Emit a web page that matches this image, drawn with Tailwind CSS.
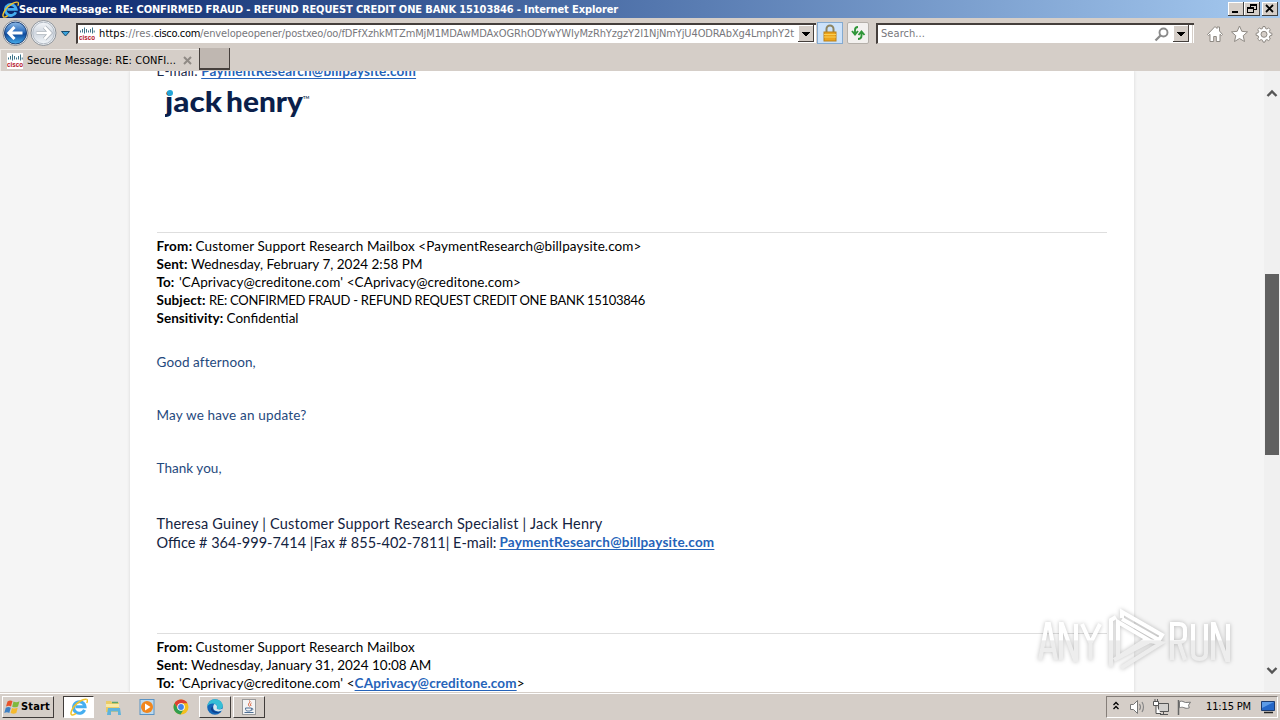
<!DOCTYPE html>
<html lang="en">
<head>
<meta charset="utf-8">
<title>Secure Message</title>
<script src="https://cdn.jsdelivr.net/npm/@tailwindcss/browser@4"></script>
</head>
<body class="w-[1280px] h-[720px] overflow-hidden">
<svg width="0" height="0" class="absolute">
  <defs>
    <linearGradient id="ball" x1="0" y1="0" x2="0" y2="1"><stop offset="0" stop-color="#8db9e6"/><stop offset=".45" stop-color="#2c6dbd"/><stop offset=".55" stop-color="#0f4a9c"/><stop offset="1" stop-color="#48b0ee"/></linearGradient>
    <linearGradient id="ball2" x1="0" y1="0" x2="0" y2="1"><stop offset="0" stop-color="#f4f6f9"/><stop offset=".5" stop-color="#cfd6df"/><stop offset="1" stop-color="#f2f6fa"/></linearGradient>
    <symbol id="ie" viewBox="0 0 20 20">
      <path d="M16.2 13.2a6.4 6.4 0 1 1 .5-3.4H6.2" fill="none" stroke="#45aef0" stroke-width="3.400"/>
      <path d="M18.6 1.6C15 .2 8 5 4.500 9.500 1.200 14 .2 18 2 18.800c1.200.5 3.200-.4 4.800-1.600" fill="none" stroke="#f0c22c" stroke-width="1.7"/>
      <path d="M18.600 1.600c1 .6.8 2.400 0 4" fill="none" stroke="#f0c22c" stroke-width="1.600"/>
    </symbol>
    <symbol id="cisco" viewBox="0 0 16 16">
      <rect width="16" height="16" fill="#fff"/>
      <path d="M1.500 4.500v2M3.500 3v3.500M5.500 1.500v6M7.500 3v3.500M9.500 4.500v2M11.500 3v3.500M13.500 1.500v6M15.200 4.500v2" stroke="#3f7388" stroke-width="1"/>
      <text x="0" y="13.500" font-family="Liberation Sans, sans-serif" font-size="7.5" font-weight="700" fill="#b5121f" textLength="16" lengthAdjust="spacingAndGlyphs">cisco</text>
    </symbol>
  </defs>
</svg>
<div class="relative w-[1280px] h-[720px] flex flex-col bg-[#d5cec8] font-['DejaVu_Sans','Noto_Sans',sans-serif] [font-stretch:condensed] text-[11px] leading-[14px] text-black">

  <!-- Title bar -->
  <header class="h-[18px] shrink-0 flex items-center bg-linear-to-r from-[#0a246a] to-[#a6caf0] pl-[2px] pr-[2px]">
    <svg class="w-[17px] h-[17px] shrink-0"><use href="#ie"/></svg>
    <span class="text-white font-bold whitespace-nowrap tracking-[-0.116px] pt-[2px]">Secure Message: RE: CONFIRMED FRAUD - REFUND REQUEST CREDIT ONE BANK 15103846 - Internet Explorer</span>
    <div class="ml-auto flex">
      <svg width="50" height="14" shape-rendering="crispEdges">
        <g fill="#d5cec8"><rect width="16" height="14"/><rect x="16" width="16" height="14"/><rect x="34" width="16" height="14"/></g>
        <g fill="none" stroke="#fff"><path d="M.5 13V.5H15M16.500 13V.5H31M34.500 13V.5H49"/></g>
        <g fill="none" stroke="#404040"><path d="M0 13.500h15.500V0M16 13.500h15.500V0M34 13.500h15.500V0"/></g>
        <path d="M4 10h6" stroke="#000" stroke-width="2"/>
        <path d="M22 4.500V2.500h6v5h-2M22 3h6" fill="none" stroke="#000"/>
        <path d="M19.500 5.500h6v5h-6zM19 6.500h7" fill="none" stroke="#000"/>
        <path d="M38 3l7 7M45 3l-7 7" stroke="#000" stroke-width="1.800" shape-rendering="auto"/>
      </svg>
    </div>
  </header>

  <!-- Address row -->
  <div class="h-[30px] shrink-0 flex items-center">
    <svg width="76" height="30" class="shrink-0">
      <circle cx="15.500" cy="15" r="12.500" fill="#f2f4f6" stroke="#858b93"/><circle cx="15.500" cy="15" r="11" fill="url(#ball)" stroke="#1b3f76"/>
      <path d="M14.500 9l-5.700 6 5.700 6M9.500 15h13" fill="none" stroke="#fff" stroke-width="3"/>
      <circle cx="43.500" cy="15" r="12.500" fill="#eef1f4" stroke="#8d939a"/><circle cx="43.500" cy="15" r="10.800" fill="url(#ball2)" stroke="#b3bbc5"/>
      <path d="M44.500 9l5.700 6-5.700 6M49.500 15h-13" fill="none" stroke="#a9b0b8" stroke-width="4"/>
      <path d="M44.500 9l5.700 6-5.700 6M49.500 15h-13" fill="none" stroke="#fff" stroke-width="2.600"/>
      <path d="M61.500 13.500h8l-4 4.500z" fill="#39a3dd" stroke="#174a6c"/>
    </svg>
    <div class="w-[740px] h-[21px] flex items-center bg-white border-t-2 border-l-2 border-[#453f3c] border-b border-b-[#d5cec8] pl-[1px]">
      <svg class="w-[16px] h-[16px] shrink-0"><use href="#cisco"/></svg>
      <div class="ml-[4px] w-[699px] overflow-hidden whitespace-nowrap text-[#77777c] pt-[1px]"><span class="tracking-[0.108px]"><span class="text-black">https</span>://res.</span><span class="text-black tracking-[-0.326px]">cisco.com</span><span class="tracking-[-0.125px]">/envelopeopener/postxeo/oo/fDFfXzhkMTZmMjM1MDAwMDAxOGRhODYwYWIyMzRhYzgzY2I1NjNmYjU4ODRAbXg4LmphY2t</span></div>
      <svg width="17" height="18" shape-rendering="crispEdges" class="shrink-0"><rect width="16" height="17" fill="#d5cec8"/><path d="M.5 16V.5H15" fill="none" stroke="#fff"/><path d="M0 16.500h15.500V0" fill="none" stroke="#453f3c"/><path d="M4 7h8l-4 4.500z" fill="#000"/></svg>
    </div>
    <div class="ml-[1px] w-[26px] h-[22px] bg-[#cce2fa] border border-[#84aad0] flex justify-center items-center">
      <svg width="16" height="18"><path d="M4.500 9V5a3.500 3.500 0 0 1 7 0v4" fill="none" stroke="#8d8460" stroke-width="2"/><rect x="2" y="8" width="12" height="9" fill="#eda41c" stroke="#b8801a"/><path d="M2 10.500h12M2 13h12" stroke="#f8cf58"/></svg>
    </div>
    <div class="ml-[4px] w-[22px] h-[22px] rounded-[2px] bg-[#f3f1ef] border border-[#b5b0aa] flex justify-center items-center">
      <svg width="16" height="16"><path d="M8 2C6 2 5 3 5 5v3M2 6l3 3.500L8 6M8 14c2 0 3.500-1 3.500-3V8M8.500 10l3-3.500 3 3.500" fill="none" stroke="#2f9638" stroke-width="1.900"/></svg>
    </div>
    <div class="ml-[7px] w-[318px] h-[21px] flex items-center bg-white border-t-2 border-l-2 border-[#453f3c] border-b border-b-[#d5cec8] pl-[3px]">
      <span class="text-[#77777c] tracking-[0.066px] pt-[1px]">Search...</span>
      <svg class="ml-auto mr-[2px]" width="17" height="16"><circle cx="9.500" cy="6.500" r="4" fill="none" stroke="#8a8a8a" stroke-width="1.900"/><path d="M6.500 9.500l-5 5" stroke="#8a8a8a" stroke-width="2.300"/></svg>
      <svg width="21" height="18" shape-rendering="crispEdges"><rect width="16" height="17" fill="#d5cec8"/><path d="M.5 16V.5H15" fill="none" stroke="#fff"/><path d="M0 16.500h15.500V0" fill="none" stroke="#453f3c"/><path d="M4 7h8l-4 4.500z" fill="#000"/><path d="M19.500 0v18" stroke="#d5cec8"/></svg>
    </div>
    <svg width="75" height="24" class="ml-[10px] mt-[4px]" fill="#fff" stroke="#8e8983" stroke-width="1">
      <path d="M11 3.500l2 2V4h2.500v4L18.500 11.500l-1 1-1.500-1.200V18.500h-3.700v-5h-2.600v5H6v-7.200l-1.500 1.200-1-1z"/>
      <path d="M35.500 3l2.300 5.300 5.700.6-4.300 3.800 1.300 5.800-5-3-5 3 1.300-5.800-4.300-3.800 5.700-.6z"/>
      <path d="M59 3.500h2l.5 1.900 1.400.6 1.800-1 1.600 1.600-1 1.800.6 1.400 2 .5v2l-2 .5-.6 1.400 1 1.800-1.600 1.600-1.800-1-1.400.6-.5 1.900h-2l-.5-1.900-1.400-.6-1.800 1-1.600-1.600 1-1.800-.6-1.400-2-.5v-2l2-.5.6-1.400-1-1.800L55.300 5l1.800 1 1.400-.6z"/><circle cx="60" cy="11.300" r="3" fill="#d5cec8"/>
    </svg>
  </div>

  <!-- Tabs -->
  <div class="h-[23px] shrink-0 flex items-start">
    <div class="w-[199px] h-[22px] mt-px flex items-center border-t border-l border-[#ece8e4] pl-[6px]">
      <svg class="w-[16px] h-[16px] shrink-0"><use href="#cisco"/></svg>
      <span class="ml-[4px] whitespace-nowrap tracking-[0.08px]">Secure Message: RE: CONFI...</span>
      <svg width="9" height="9" class="ml-[7px]"><path d="M1 1l7 7M8 1l-7 7" stroke="#8f8a85" stroke-width="2"/></svg>
    </div>
    <div class="w-[31px] h-[22px] bg-[#bfb7b1] border-[#453f3c] border-b-2 border-r border-l"></div>
  </div>

  <!-- Page -->
  <main class="h-[621px] shrink-0 flex bg-[#f5f5f5] overflow-hidden">
    <article class="ml-[130px] w-[1004px] h-[621px] bg-white shadow-[0_0_3px_#d4d4d4] pl-[26.500px] pr-[27px] overflow-hidden font-[Lato,'Noto_Sans',sans-serif] [font-stretch:normal] text-[13.5px] leading-[18px] [&_p]:whitespace-pre [&_b]:font-bold">
      <p class="-mt-[9px] h-[19px] leading-[19px] text-[13.5px] text-[#1b2b4b]"><span class="tracking-[0.1px]">E-mail: </span><b class="text-[#2563b9] underline underline-offset-2 tracking-[0.22px]">PaymentResearch@billpaysite.com</b></p>
      <svg class="mt-[6px] ml-[8px]" width="150" height="34">
        <g font-family="Lato, sans-serif" font-weight="900" font-size="28" fill="#0b1f4b">
          <text x="0" y="25" textLength="57" lengthAdjust="spacingAndGlyphs">jack</text>
          <text x="61" y="25" textLength="77" lengthAdjust="spacingAndGlyphs">henry</text>
        </g>
        <circle cx="5" cy="6" r="3" fill="#24a5d8"/>
        <text x="138" y="12" font-family="Lato, sans-serif" font-weight="700" font-size="4" fill="#0b1f4b">TM</text>
      </svg>
      <div class="mt-[111px] h-px bg-[#dedede]"></div>
      <div class="mt-[4px]">
        <p class="flex"><b class="w-[39px] tracking-[0.3px]">From:</b><span class="tracking-[0.105px]">Customer Support Research Mailbox &lt;PaymentResearch@billpaysite.com&gt;</span></p>
        <p class="flex"><b class="w-[34.500px] tracking-[0.07px]">Sent:</b><span>Wednesday, February 7, 2024 2:58 PM</span></p>
        <p class="flex"><b class="w-[22.500px]">To:</b><span class="tracking-[0.09px]">'CAprivacy@creditone.com' &lt;CAprivacy@creditone.com&gt;</span></p>
        <p class="flex"><b class="w-[52.500px] tracking-[0.1px]">Subject:</b><span class="text-[13px] tracking-[-0.28px]">RE: CONFIRMED FRAUD - REFUND REQUEST CREDIT ONE BANK 15103846</span></p>
        <p class="flex"><b class="w-[70px] tracking-[0.04px]">Sensitivity:</b><span>Confidential</span></p>
      </div>
      <div class="mt-[26px] flex flex-col gap-[35px] text-[#1f497d]">
        <p class="tracking-[0.1px]">Good afternoon,</p>
        <p class="tracking-[0.19px]">May we have an update?</p>
        <p class="tracking-[0.04px]">Thank you,</p>
      </div>
      <div class="mt-[37px] text-[14.500px] leading-[19px] text-[#14233f]">
        <p class="tracking-[0.22px]">Theresa Guiney | Customer Support Research Specialist | Jack Henry</p>
        <p class="flex"><span class="w-[343px]">Office # 364-999-7414 |Fax # 855-402-7811| E-mail:</span><b class="text-[13.5px] text-[#2563b9] underline underline-offset-2 tracking-[0.22px]">PaymentResearch@billpaysite.com</b></p>
      </div>
      <div class="mt-[81px] h-px bg-[#dedede]"></div>
      <div class="mt-[4px]">
        <p class="flex"><b class="w-[39px] tracking-[0.3px]">From:</b><span class="tracking-[0.105px]">Customer Support Research Mailbox</span></p>
        <p class="flex"><b class="w-[34.500px] tracking-[0.07px]">Sent:</b><span>Wednesday, January 31, 2024 10:08 AM</span></p>
        <p class="flex"><b class="w-[22.500px]">To:</b><span class="tracking-[0.09px]">'CAprivacy@creditone.com' &lt;</span><b class="text-[#2563b9] underline underline-offset-2 tracking-[0.13px]">CAprivacy@creditone.com</b><span>&gt;</span></p>
      </div>
    </article>
    <aside class="ml-auto w-[16px] flex flex-col items-center bg-[#f0f0f0]">
      <svg width="12" height="8" class="mt-[18px]"><path d="M1.500 7L6 2.500 10.500 7" fill="none" stroke="#555" stroke-width="2.400"/></svg>
      <div class="mt-[177px] w-[14px] h-[181px] bg-[#606060]"></div>
      <svg width="12" height="8" class="mt-[212px]"><path d="M1.500 1L6 5.500 10.500 1" fill="none" stroke="#555" stroke-width="2.400"/></svg>
    </aside>
  </main>

  <!-- Taskbar -->
  <footer class="h-[28px] shrink-0 flex items-center border-t border-[#d5cec8] shadow-[inset_0_1px_0_#fff] bg-[#d5cec8] pl-[2px] pr-[2px]">
    <div class="w-[52px] h-[22px] flex items-center border border-white border-r-[#403c3a] border-b-[#403c3a] pl-[1px]">
      <svg width="17" height="16"><path d="M3.500 2.500C5.500 1 7 1.300 8.500 2L7 7.500C5.500 6.500 4 6.600 2 7.500z" fill="#e8532a"/><path d="M9.500 2.500c2 1 4 .9 6-.3L14 7.500c-2 1-3.700 1.200-5.800.3z" fill="#7fb93c"/><path d="M1.800 8.700c2-.9 3.400-.9 5 0L5.300 14c-1.500-.9-3-1-5 0z" fill="#3e80c4"/><path d="M8 9c2 .9 3.700.8 5.700-.2L12.300 14c-2 1-3.700 1-5.700 0z" fill="#f5b92c"/></svg>
      <span class="font-bold tracking-[0.169px]">Start</span>
    </div>
    <div class="ml-[9px] w-[31px] h-[22px] flex justify-center items-center bg-white border border-[#403c3a] border-r-white border-b-white"><svg class="w-[18px] h-[18px]"><use href="#ie"/></svg></div>
    <svg width="18" height="18" class="ml-[10px]"><path d="M2 3h5l1 1.500h7V14H2z" fill="#eacb67"/><path d="M2 6h13v3H2z" fill="#f8e9a6"/><path d="M4 10h12l1 7h-3v-3.500H7V17H3z" fill="#5eb3dc"/><path d="M8 4.500h6" stroke="#5aa56a" stroke-width="1.500"/></svg>
    <svg width="18" height="18" class="ml-[16px]"><rect x="2" y="1.500" width="14" height="15" fill="#bcd9ee" stroke="#5a93c4"/><circle cx="9" cy="9" r="6" fill="#f1861d"/><path d="M7 5.500l5.500 3.500L7 12.500z" fill="#fff"/></svg>
    <svg width="18" height="18" class="ml-[16px]"><circle cx="9" cy="9" r="7.500" fill="#f3c01e"/><path d="M2.500 5.300A7.500 7.500 0 0 1 15.500 5.300H9L6 11z" fill="#dc4033"/><path d="M2.500 5.300A7.500 7.500 0 0 0 8.500 16.500L12 10.800 9 12.500 5.700 10.500z" fill="#2f9e4f"/><circle cx="9" cy="9" r="3.800" fill="#fff"/><circle cx="9" cy="9" r="2.900" fill="#4084ea"/></svg>
    <div class="ml-[9px] w-[32px] h-[22px] flex justify-center items-center border border-white border-r-[#403c3a] border-b-[#403c3a]"><svg width="18" height="18"><circle cx="9" cy="9" r="7.800" fill="#1467b8"/><path d="M1.200 8.500C2 3.500 5.500 1 9.500 1.200c4.500.2 7.300 3.500 7.300 6.500 0 3-2.800 4-5 3.500-1.300-.3-.5-1.500-.6-2.700C11 6.500 9 5.400 6.700 5.400 4.500 5.400 2.400 6.300 1.200 8.500z" fill="#35bfd6"/><path d="M7 8.500c-1 4 2.500 6.500 7.500 5-2 2.600-8.500 2-9.500-2C4.700 10 5.500 9 7 8.500z" fill="#0d3f8e"/><path d="M11.200 11.100c-.8-.5-.1-1.500-.2-2.500-.3-1.500-1.500-2.400-2.600-2.500-1.300 1-1.900 4.500.2 6.200 2 1.600 5.400 1.300 7.600.3.300-.6.500-1.200.5-1.800-1.500.8-4.500.9-5.500.3z" fill="#d5e8ee"/></svg></div>
    <div class="ml-[2px] w-[32px] h-[22px] flex justify-center items-center border border-white border-r-[#403c3a] border-b-[#403c3a]"><svg width="16" height="16"><rect x="1.500" y=".5" width="13" height="15" fill="#f4f4f4" stroke="#999"/><path d="M8.500 1.500c2 2-3 3 0 6M10.500 4c-1.500 1-1 1.500-.5 3" fill="none" stroke="#d8542b"/><path d="M4.500 9h6c0 3-1 3-3 3s-3 0-3-3M10.500 9.500c2.500-.5 1.500 2-.5 1.700M3.500 13.500h9" fill="none" stroke="#4f6f94"/></svg></div>

    <div class="ml-auto w-[172px] h-[22px] flex items-center border border-[#857e79] border-r-white border-b-white">
      <svg width="84" height="20" class="ml-[5px]">
        <path d="M1.500 8L4 5.500l2.500 2.500M1.500 12L4 9.500l2.500 2.500" fill="none" stroke="#000" stroke-width="1.300"/>
        <path d="M18.500 7.500h3l4-4v13l-4-4h-3z" fill="#fff" stroke="#777"/><path d="M27.500 7q2 3 0 6M30 5q3 5 0 10" fill="none" stroke="#888" stroke-width="1.200"/>
        <path d="M46.500 6.500h10v8h-10zM48 17.500h8M51.500 15v2" fill="#d2d0ce" stroke="#555"/><path d="M41.500 4.500h5v4h-5zM43 2v2M45.500 2v2M44 8.500v8h5" fill="#fff" stroke="#555"/>
        <path d="M66.500 3v15" stroke="#666" stroke-width="1.500"/><path d="M67.500 4.500c3-1 4 .5 6 1l5-.3-2 3 .8 2.600c-2.500 1-4 .4-5.500-.2-1.500-.6-3-.3-4.300.2z" fill="#fff" stroke="#777"/>
      </svg>
      <span class="ml-[10px] whitespace-nowrap tracking-[-0.146px]">11:15 PM</span>
      <svg width="16" height="16" class="ml-auto mr-[1px]"><path d="M1.500 2.500h13v9h-13z" fill="#2467c7" stroke="#1c3c70"/><path d="M2 3h12L2 9z" fill="#5c9be6"/><path d="M4 13.500h9" stroke="#222" stroke-width="1.500"/></svg>
    </div>
  </footer>

  <!-- Watermark over the page -->
  <svg class="absolute left-[1030px] top-[600px] drop-shadow-[0_0_2px_rgba(0,0,0,0.25)]" width="215" height="80">
    <defs><linearGradient id="wm" x1="0" y1="0" x2="0" y2="80" gradientUnits="userSpaceOnUse"><stop offset=".5" stop-color="#fff"/><stop offset=".51" stop-color="#ededed"/></linearGradient></defs>
    <g fill="none" stroke="url(#wm)" stroke-width="4">
      <path d="M10 60L17 24h2l7 36M13 50h10M31 60V24h1l13 36h1V24M52 24l8.500 19v17M70 24l-9.500 19"/>
      <path d="M142 60V24h7q6 0 6 6v6q0 6-6 6h-7M149 42l6 18M163 24v29q0 6 6.500 6t6.500-6V24M183 60V24h1l13 36h1V24"/>
      <path d="M81 67V20l5-3M88 57V22l29 17-33 21M92 18v-6l40 23-3 5L92 19M84 60l36-19 11 2L91 68"/>
    </g>
  </svg>
</div>
</body>
</html>
